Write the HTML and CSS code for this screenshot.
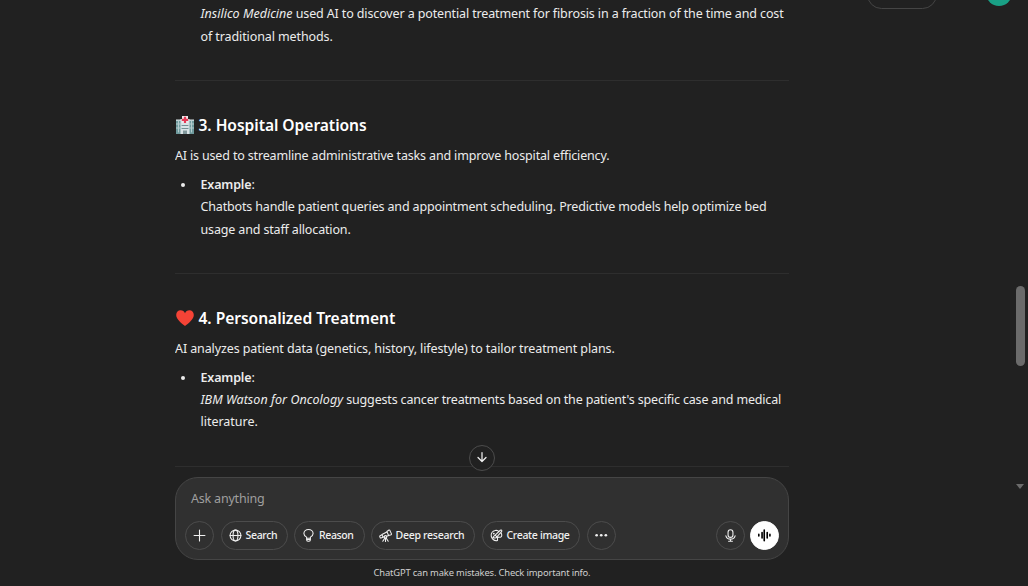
FILE: index.html
```
<!DOCTYPE html>
<html lang="en">
<head>
<meta charset="utf-8">
<title>ChatGPT</title>
<link rel="stylesheet" href="styles.css">
</head>
<body>
<div class="app">
  <main class="thread">
    <div class="answer">
      <p class="indent"><span class="l1"><em class="e1">Insilico Medicine</em> used AI to discover a potential treatment for fibrosis in a fraction of the time and cost</span><br><span class="l2">of traditional methods.</span></p>
    </div>
    <section class="answer topic">
      <h3><svg class="emoji" viewBox="0 0 18 18"><path fill="#6e9a9d" d="M0 4h5v14H0zM13 4h5v14h-5z"/><path fill="#d9e3e6" d="M0 3.5h5.500v1.300H0zM12.500 3.500H18v1.300h-5.500zM4.500 3h9v15h-9z"/><path stroke="#b5cbce" stroke-width="1" d="M0 8h5M0 12h5M13 8h5M13 12h5M2.500 5v11M15.500 5v11"/><path stroke="#739094" stroke-width="1.200" d="M6 9.500h6M6 12.500h6"/><path fill="#80979b" d="M7 14.500h4V18H7z"/><path d="M6 0h6v7H6z" fill="#eee8eb"/><path fill="#e53955" d="M7.900.8h2.200v2h2.100v2.200h-2.100v2H7.900V5H5.800V2.800h2.100z"/></svg><span>3. Hospital Operations</span></h3>
      <p><span class="p1">AI is used to streamline administrative tasks and improve hospital efficiency.</span></p>
      <ul><li><strong>Example</strong>:<br><span class="c1">Chatbots handle patient queries and appointment scheduling. Predictive models help optimize bed</span><br><span class="c2">usage and staff allocation.</span></li></ul>
    </section>
    <section class="answer topic">
      <h3><svg class="emoji" viewBox="0 0 18 18"><path fill="#f44336" d="M9 17C6 14.800.2 10.500.2 6.100.2 3 2.200 1.200 4.500 1.200 6.700 1.200 8.300 2.500 9 4.200c.7-1.700 2.300-3 4.500-3 2.300 0 4.300 1.800 4.300 4.900C17.800 10.500 12 14.800 9 17z"/></svg><span>4. Personalized Treatment</span></h3>
      <p><span class="p2">AI analyzes patient data (genetics, history, lifestyle) to tailor treatment plans.</span></p>
      <ul class="late"><li><strong>Example</strong>:<br><span class="c3"><em class="e2">IBM Watson for Oncology</em> suggests cancer treatments based on the patient's specific case and medical</span><br><span class="c4">literature.</span></li></ul>
    </section>
    <hr class="last-rule">
  </main>
  <form class="composer">
    <div class="placeholder">Ask anything</div>
    <div class="tools">
      <button type="button" class="round"><svg viewBox="0 0 24 24"><path d="M12 2v20M2 12h20"/></svg></button>
      <button type="button" class="pill search"><svg viewBox="0 0 24 24"><circle cx="12" cy="12" r="10"/><ellipse cx="12" cy="12" rx="4.500" ry="10"/><path d="M2 12h20"/></svg><span>Search</span></button>
      <button type="button" class="pill reason"><svg viewBox="0 0 24 24"><path d="M8.500 17v-2C5.500 13.500 3.500 11.500 3.500 8.500a8.500 7.500 0 0 1 17 0c0 3-2 5-5 6.500v2zM8.500 17v3q0 2.500 2.500 2.500h2q2.500 0 2.500-2.500v-3M9 19.500h6"/></svg><span>Reason</span></button>
      <button type="button" class="pill deep"><svg viewBox="0 0 24 24"><path d="M14.500 4.500l4-2.500q1-.5 1.500.5l3 6.500q.4 1-.6 1.500l-4.600 1.700zM14.500 5.500L5.500 10.300l2 5L9.700 14.300M14.300 13.200L17.500 12M5.500 10.700L2 12.500q-1 .6-.6 1.500l.8 2q.5 1 1.500.6l3.800-1.500M10.800 16.500L7 22.500M13.200 16.500L17 22.500M12 17v6"/><circle cx="12" cy="14.600" r="2.300"/></svg><span>Deep research</span></button>
      <button type="button" class="pill create"><svg viewBox="0 0 24 24"><path d="M15 3.500Q12.500 2 9.500 2.800C4.500 4 1.500 8.500 2.300 13.200 3 18 7.500 22 12.500 21.500c2-.2 1.500-2 1.200-3.500-.4-2 1-3.200 3-3 2.500.3 4.800.2 5-3 0-1.500-.3-3-.9-4.300M9.500 11.500L19 2.300q1.500-1 2.500 0 .9 1.200-.2 2.500L12.700 14.700zM9.500 11.500c-2.300.3-2 3-4 4.200 2.300 1.700 6.500 1.300 7.200-1"/><circle cx="7" cy="8.500" r=".8"/></svg><span>Create image</span></button>
      <button type="button" class="round"><svg viewBox="0 0 24 24" class="dots"><circle cx="3" cy="11.500" r="2.500"/><circle cx="11.500" cy="11.500" r="2.500"/><circle cx="20" cy="11.500" r="2.500"/></svg></button>
      <span class="spacer"></span>
      <button type="button" class="round mic"><svg viewBox="0 0 24 24"><rect x="7.500" y="1.500" width="9" height="14" rx="4.500"/><path d="M3.500 12.500C4.500 16.500 8 18.700 12 18.700s7.500-2.200 8.500-6.200M12 19v3.500M8.500 22.500h7"/></svg></button>
      <button type="button" class="round voice"><svg viewBox="0 0 24 24"><path d="M1.500 10v3M7.500 6.500v10M11.500 2v19.500M17 6.500v10M22 10v3"/></svg></button>
    </div>
  </form>
  <footer>ChatGPT can make mistakes. Check important info.</footer>
</div>
<div class="share"></div>
<div class="avatar"></div>
<button type="button" class="jump"><svg viewBox="0 0 24 24"><path d="M12 3v18M4 13l8 8 8-8"/></svg></button>
<div class="thumb"></div>
<div class="arrow"></div>
</body>
</html>
```
FILE: styles.css
```
* { box-sizing: border-box; }
body {
  margin: 0;
  width: 1028px;
  height: 586px;
  overflow: hidden;
  background: #212121;
  color: #ececec;
  font: 12.5px/22.4px "Noto Sans", sans-serif;
  white-space: nowrap;
}
.app {
  display: flex;
  flex-direction: column;
  width: 614px;
  height: 586px;
  margin-left: 175px;
}
.thread { height: 477px; overflow: hidden; }
p, ul, h3 { margin: 0; }
.indent { padding: 1.500px 0 0 25.500px; height: 80px; line-height: 23px; }
.topic { height: 193px; border-top: 1px solid #2e2e2e; padding-top: 32px; }
h3 { display: flex; align-items: center; height: 24px; font-size: 15.600px; font-weight: 600; color: #fff; gap: 5px; letter-spacing: -.05px; }
.emoji { width: 18px; height: 18px; margin-left: .5px; }
h3 + p { margin-top: 8px; }
ul { list-style: none; padding: 0 0 0 25.500px; margin-top: 6.500px; position: relative; line-height: 22.500px; }
.late { margin-top: 6.200px; line-height: 22.400px; }
ul::before { content: ""; position: absolute; left: 6px; top: 9px; width: 4px; height: 4px; border-radius: 50%; background: #ececec; }
strong { font-weight: 600; letter-spacing: -.15px; }

/* Optical tracking per line */
.l1 { letter-spacing: -.128px; }
.e1 { letter-spacing: .01px; }
.l2 { letter-spacing: -.1px; }
.p1 { letter-spacing: -.16px; }
.p2 { letter-spacing: -.103px; }
.c1 { letter-spacing: -.154px; }
.c2 { letter-spacing: -.15px; }
.c3 { letter-spacing: -.165px; }
.e2 { letter-spacing: .05px; }
.c4 { letter-spacing: -.02px; }

.last-rule { margin: 0; border: 0; border-top: 1px solid #2e2e2e; }
.composer {
  height: 83px;
  border: 1px solid #454545;
  border-radius: 23px;
  background: #303030;
  padding: 10px 9px;
}
.placeholder { padding-left: 6px; color: #9f9f9f; height: 33px; letter-spacing: -.2px; }
.tools { display: flex; align-items: center; }
button { display: flex; align-items: center; justify-content: center; border: 1px solid #4c4c4c; background: transparent; color: #f0f0f0; height: 29px; padding: 0; font: 500 10.500px/15px "Noto Sans", sans-serif; }
svg { fill: none; stroke: currentColor; stroke-width: 2; stroke-linecap: round; stroke-linejoin: round; flex: none; }
.emoji { stroke: none; }
.round { width: 29px; border-radius: 50%; }
.round svg { width: 13px; height: 13px; }
.pill { border-radius: 15px; gap: 4px; justify-content: flex-start; padding-left: 6.500px; }
.pill svg { width: 13px; height: 13px; }
.search { width: 67px; margin-left: 7px; letter-spacing: -.33px; }
.reason { width: 71px; margin-left: 6px; letter-spacing: -.38px; padding-left: 7px; }
.deep { width: 104px; margin: 0 7px 0 6px; letter-spacing: -.27px; }
.create { width: 98px; margin-right: 7px; letter-spacing: -.33px; }
.dots circle { fill: currentColor; stroke: none; }
.spacer { flex: 1; }
.mic { margin-right: 5px; }
.voice { background: #fff; border-color: #fff; color: #000; }
.voice svg { stroke-width: 3; }
footer { text-align: center; font-size: 9.400px; line-height: 25px; color: #cfcfcf; letter-spacing: -.16px; }
.share { position: absolute; left: 867px; top: -20px; width: 70px; height: 29px; border: 1px solid #454545; border-radius: 15px; }
.avatar { position: absolute; left: 986px; top: -20px; width: 26px; height: 26px; border-radius: 50%; background: #19a085; }
.jump { position: absolute; left: 469px; top: 444.500px; width: 26px; height: 26px; border-radius: 50%; background: #212121; }
.jump svg { width: 12px; height: 12px; stroke-width: 2.500; margin-top: -1px; }
.thumb { position: absolute; left: 1016px; top: 286px; width: 9px; height: 80px; border-radius: 5px; background: #6b6b6b; }
.arrow { position: absolute; left: 1016px; top: 484px; border: solid transparent; border-width: 5px 4.500px 0; border-top-color: #6b6b6b; }
```
